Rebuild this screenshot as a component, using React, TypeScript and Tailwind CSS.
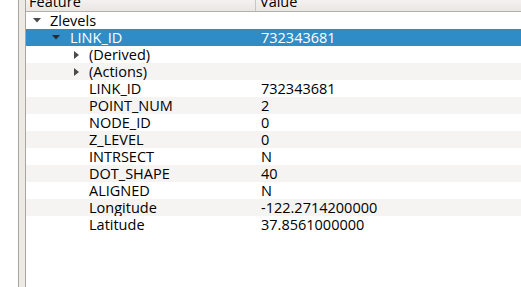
const rows: { label: string; value: string; depth: number; kind?: "open" | "closed"; selected?: boolean }[] = [
  { label: "Zlevels", value: "", depth: 0, kind: "open" },
  { label: "LINK_ID", value: "732343681", depth: 1, kind: "open", selected: true },
  { label: "(Derived)", value: "", depth: 2, kind: "closed" },
  { label: "(Actions)", value: "", depth: 2, kind: "closed" },
  { label: "LINK_ID", value: "732343681", depth: 2 },
  { label: "POINT_NUM", value: "2", depth: 2 },
  { label: "NODE_ID", value: "0", depth: 2 },
  { label: "Z_LEVEL", value: "0", depth: 2 },
  { label: "INTRSECT", value: "N", depth: 2 },
  { label: "DOT_SHAPE", value: "40", depth: 2 },
  { label: "ALIGNED", value: "N", depth: 2 },
  { label: "Longitude", value: "-122.2714200000", depth: 2 },
  { label: "Latitude", value: "37.8561000000", depth: 2 },
];

const textPad = ["pl-[24px]", "pl-[44px]", "pl-[63px]"];
const arrowPad = ["pl-[7px]", "pl-[26px]", "pl-[48px]"];

function Arrow({ kind, dark }: { kind: "open" | "closed"; dark?: boolean }) {
  const fill = dark ? "#1f2a36" : "#4a4a4a";
  if (kind === "open") {
    return (
      <svg width="8" height="5" viewBox="0 0 8 5" className="block">
        <polygon points="0,0 8,0 4,4.5" fill={fill} />
      </svg>
    );
  }
  return (
    <svg width="5" height="8" viewBox="0 0 5 8" className="block">
      <polygon points="0,0 5,4 0,8" fill={fill} />
    </svg>
  );
}

export default function App() {
  return (
    <div
      className="flex h-[287px] w-[521px] overflow-hidden bg-white text-[14.5px] text-black"
      style={{ fontFamily: '"Open Sans", "Noto Sans", sans-serif' }}
    >
      <div className="w-[18px] shrink-0" />
      <div className="w-[8px] shrink-0 border-x border-[#a9a5a0] bg-[#edeae6]" />

      <div className="flex flex-1 flex-col">
        <div className="grid h-[12px] grid-cols-[230px_1fr] overflow-hidden border-b border-[#b3afaa] bg-gradient-to-b from-[#f4f2f0] to-[#e9e6e3]">
          <div className="border-r border-[#c9c5c0] pl-[3px]">
            <div className="mt-[-7px] leading-[17px]">Feature</div>
          </div>
          <div className="pl-[4px]">
            <div className="mt-[-7px] leading-[17px]">Value</div>
          </div>
        </div>

        {rows.map((r, i) => (
          <div
            key={i}
            className={
              "grid h-[17px] grid-cols-[230px_1fr] overflow-hidden leading-[17px] " +
              (r.selected ? "bg-[#308cc6] text-white" : i % 2 === 1 ? "bg-[#f5f4f2]" : "bg-white")
            }
          >
            <div className="relative whitespace-nowrap">
              {r.kind && (
                <div className={"absolute top-0 flex h-[17px] items-center " + arrowPad[r.depth]}>
                  <Arrow kind={r.kind} dark={r.selected} />
                </div>
              )}
              <div className={textPad[r.depth]}>{r.label}</div>
            </div>
            <div className="whitespace-nowrap pl-[5px]">{r.value}</div>
          </div>
        ))}
      </div>
    </div>
  );
}
